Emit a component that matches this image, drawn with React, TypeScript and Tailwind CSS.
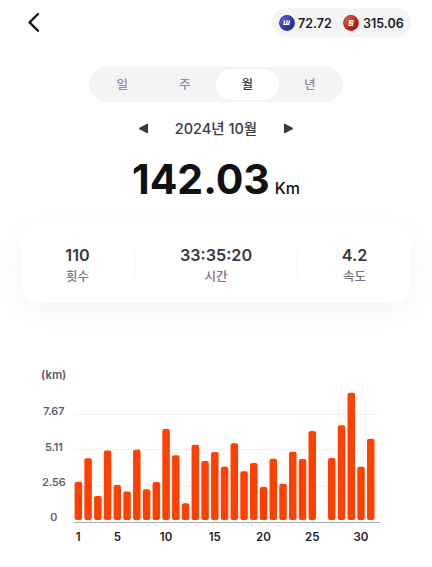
import { useState } from "react";

type Stat = {
  value: string;
  label: string;
};

const TABS = ["일", "주", "월", "년"];

const STATS: Stat[] = [
  { value: "110", label: "횟수" },
  { value: "33:35:20", label: "시간" },
  { value: "4.2", label: "속도" },
];

// distance per day, in km
const DAILY_KM = [
  2.74, 4.41, 1.72, 4.96, 2.5, 2.03, 5.03, 2.2, 2.72, 6.5, 4.63, 1.19, 5.37, 4.22, 4.86, 3.81,
  5.48, 3.48, 4.08, 2.36, 4.38, 2.6, 4.88, 4.36, 6.37, 0, 4.43, 6.77, 9.1, 3.81, 5.81,
];

const PX_PER_KM = 13.99;
const BAR_STEP = 9.747;
const BAR_BOTTOM = 160;

const TICKS = [
  { label: "7.67", y: 55, line: 54.5 },
  { label: "5.11", y: 90.5, line: 89.5 },
  { label: "2.56", y: 125.8, line: 126.5 },
  { label: "0", y: 161.3, line: null },
];

const DAY_LABELS = [1, 5, 10, 15, 20, 25, 30];

function CoinIcon({ kind }: { kind: "w" | "s" }) {
  const isW = kind === "w";
  return (
    <svg width="16" height="16" viewBox="0 0 16 16" className="shrink-0">
      <defs>
        <linearGradient id={`coin-${kind}`} x1="0" y1="0" x2="1" y2="1">
          <stop offset="0.1" stopColor={isW ? "#6669c9" : "#d0695f"} />
          <stop offset="0.5" stopColor={isW ? "#3a3cb4" : "#c92a18"} />
          <stop offset="1" stopColor={isW ? "#20238b" : "#961407"} />
        </linearGradient>
      </defs>
      <circle cx="8" cy="8" r="7.9" fill={isW ? "#2d2f9b" : "#ac2317"} />
      <circle cx="8" cy="8" r="6.9" fill={`url(#coin-${kind})`} />
      {isW ? (
        <path d="M5.6 5.3 5.1 9.4h4.7l.6-4.1M8.1 5.3l-.4 4" fill="none" stroke="#fff" strokeWidth="1.4" />
      ) : (
        <path d="M10.8 5.8H6.7L6.3 8h3.4l-.4 2.2H5.1" fill="none" stroke="#fff" strokeWidth="1.5" />
      )}
    </svg>
  );
}

function DistanceChart() {
  return (
    <svg width="360" height="200" viewBox="0 0 360 200" className="ml-[30px] block">
      <g fill="#5a586c" fontSize="11" fontWeight="500" textAnchor="middle">
        <text x="23.7" y="19" fontWeight="600" fontSize="11.3">
          (km)
        </text>
        {TICKS.map((tick) => (
          <text key={tick.label} x="23.9" y={tick.y} stroke="#5a586c" strokeWidth="0.15">
            {tick.label}
          </text>
        ))}
      </g>

      {TICKS.map((tick) =>
        tick.line === null ? null : (
          <path key={tick.label} d={`M44 ${tick.line}h306`} stroke="#f2f2f4" />
        )
      )}

      {DAILY_KM.map((km, i) =>
        km > 0 ? (
          <rect
            key={i}
            x={44.6 + i * BAR_STEP}
            y={BAR_BOTTOM - km * PX_PER_KM}
            width="7.5"
            height={km * PX_PER_KM}
            rx="2"
            fill="#ff4000"
          />
        ) : null
      )}

      <path d="M44 162.5h306" stroke="#a9a9b8" />

      <g fill="#222226" fontSize="11.5" fontWeight="600" textAnchor="middle">
        {DAY_LABELS.map((day) => (
          <text key={day} x={48.3 + (day - 1) * BAR_STEP} y="181">
            {day}
          </text>
        ))}
      </g>
    </svg>
  );
}

export default function App() {
  const [activeTab, setActiveTab] = useState("월");

  return (
    <main className="h-[567px] w-[432px] overflow-hidden bg-white font-['Inter','Noto_Sans_CJK_KR',sans-serif] text-[#3a3946]">
      <header className="flex h-[45px] items-center justify-between pr-[21px] pl-[27px]">
        <button aria-label="뒤로" className="pb-px">
          <svg width="14" height="20" viewBox="0 0 14 20" fill="none" stroke="#111114" strokeWidth="2.3" strokeLinecap="round" strokeLinejoin="round">
            <path d="M11 2 2.6 10.4l8.4 8.4" />
          </svg>
        </button>
        <div className="flex h-[29px] w-[139px] items-center rounded-full bg-[#f4f4f6] pl-[7px] text-[12.5px] font-semibold text-[#1d1d22]">
          <CoinIcon kind="w" />
          <span className="ml-[3px] w-[45px] pt-[3px]">72.72</span>
          <CoinIcon kind="s" />
          <span className="ml-1 pt-[3px]">315.06</span>
        </div>
      </header>

      <nav className="mx-auto mt-[22px] flex h-[35px] w-[254px] rounded-full bg-[#f4f4f6] p-[2px]">
        {TABS.map((tab) => (
          <button
            key={tab}
            onClick={() => setActiveTab(tab)}
            className={
              tab === activeTab
                ? "h-[31px] flex-1 rounded-full bg-white pt-px text-[12.5px] font-medium text-[#3a3946]"
                : "h-[31px] flex-1 rounded-full pt-px text-[12.5px] font-medium text-[#8d8b9f]"
            }
          >
            {tab}
          </button>
        ))}
      </nav>

      <div className="mt-[16px] flex h-5 items-center justify-center">
        <svg width="11" height="11" viewBox="0 0 11 11" fill="#3a384a" stroke="#3a384a" strokeLinejoin="round">
          <path d="M9.5 1v9L1 5.5z" />
        </svg>
        <span className="w-[134px] pt-px text-center text-[14.5px] font-medium whitespace-nowrap">2024년 10월</span>
        <svg width="11" height="11" viewBox="0 0 11 11" fill="#3a384a" stroke="#3a384a" strokeLinejoin="round">
          <path d="M1.5 1v9l8.5-4.5z" />
        </svg>
      </div>

      <div className="mt-[16px] flex h-[50px] items-baseline justify-center text-[#111114]">
        <span className="text-[41px] leading-[50px] font-bold">142.03</span>
        <span className="ml-[5px] text-base font-medium">Km</span>
      </div>

      <section className="mx-[21px] mt-[20px] flex h-[79px] items-center rounded-[18px] bg-white shadow-[0_8px_36px_rgba(0,0,0,0.05)]">
        {STATS.map((stat, i) => (
          <div
            key={stat.label}
            className={
              i === 1
                ? "flex h-[27px] w-[164px] flex-col items-center justify-center border-x border-[#f1f1f4]"
                : "flex h-[27px] flex-1 flex-col items-center justify-center"
            }
          >
            <p className="pt-[3px] text-[16.2px] leading-[22px] font-semibold">{stat.value}</p>
            <p className="text-[12.5px] leading-[21px] font-medium text-[#777588]">{stat.label}</p>
          </div>
        ))}
      </section>

      <div className="mt-[57px]">
        <DistanceChart />
      </div>
    </main>
  );
}
